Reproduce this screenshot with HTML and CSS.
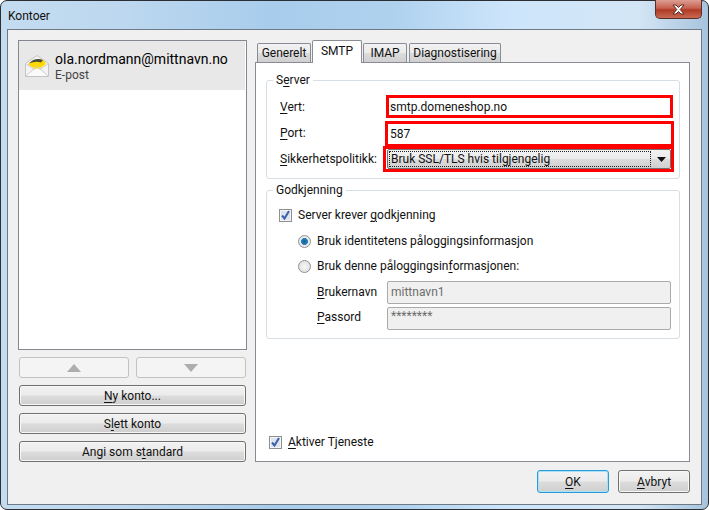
FILE: index.html
```html
<!DOCTYPE html>
<html lang="no">
<head>
<meta charset="utf-8">
<title>Kontoer</title>
<link rel="stylesheet" href="styles.css">
</head>
<body>
<div class="window">
  <div class="titlebar">
    <span class="title">Kontoer</span>
    <button class="close" aria-label="Lukk">
      <svg width="13" height="11" viewBox="0 0 13 11"><path d="M1 1h3l2.500 2.500L9 1h3L8.200 5.500 12 10H9L6.500 7.500 4 10H1l3.800-4.500z" fill="#fff" stroke="#5e2a22" stroke-width="1"/></svg>
    </button>
  </div>
  <div class="client">
    <div class="main">
      <div class="left">
        <div class="list">
          <div class="account">
            <svg class="envelope" width="24" height="24" viewBox="0 0 24 24">
              <path d="M.5 9.500 12 1.500l11.500 8v13H.5z" fill="#f4f4f4" stroke="#c4c4c4"/>
              <path d="M3 10.500C7 6 13 4 19 6.500l2 3.500-8 5.500a2 2 0 0 1-2 0z" fill="#ffd800"/>
              <path d="M4 9.500C8 5 13 4 18 6l-2 2.500C12 7 8 8 4 9.500z" fill="#4a4a3a"/>
              <path d="M.5 22.500 10 13.500q2-1.500 4 0l9.500 9M.5 9.500l9.500 6.500M23.500 9.500l-9.500 6.500" fill="none" stroke="#cfcfcf"/>
              <path d="M2 22 11 14.500h2L22 22z" fill="#fafafa"/>
            </svg>
            <div class="account-text">
              <div class="account-name">ola.nordmann@mittnavn.no</div>
              <div class="account-type">E-post</div>
            </div>
          </div>
        </div>
        <div class="arrows">
          <button class="btn disabled"><svg width="14" height="8" viewBox="0 0 14 8"><path d="M7 0l7 8H0z" fill="#adadad"/></svg></button>
          <button class="btn disabled"><svg width="14" height="8" viewBox="0 0 14 8"><path d="M0 0h14L7 8z" fill="#adadad"/></svg></button>
        </div>
        <button class="btn wide"><u>N</u>y konto...</button>
        <button class="btn wide">S<u>l</u>ett konto</button>
        <button class="btn wide">Angi som s<u>t</u>andard</button>
      </div>
      <div class="right">
        <div class="tabs">
          <div class="tab t1">Generelt</div>
          <div class="tab active t2">SMTP</div>
          <div class="tab t3">IMAP</div>
          <div class="tab t4">Diagnostisering</div>
        </div>
        <div class="pane">
          <fieldset class="group server">
            <legend>S<u>e</u>rver</legend>
            <div class="row row-vert">
              <label class="lbl"><u>V</u>ert:</label>
              <div class="red red-vert"><span class="val">smtp.domeneshop.no</span></div>
            </div>
            <div class="row row-port">
              <label class="lbl"><u>P</u>ort:</label>
              <div class="red red-port"><span class="val">587</span></div>
            </div>
            <div class="row row-sik">
              <label class="lbl"><u>S</u>ikkerhetspolitikk:</label>
              <div class="red red-sik">
                <div class="select">
                  <span class="focus">Bruk SSL/TLS hvis tilgjengelig</span>
                  <svg class="caret" width="9" height="5" viewBox="0 0 9 5"><path d="M0 0h9L4.500 5z" fill="#111"/></svg>
                </div>
              </div>
            </div>
          </fieldset>
          <fieldset class="group auth">
            <legend>Godkjenning</legend>
            <div class="check-row">
              <span class="checkbox"><svg width="11" height="11" viewBox="0 0 11 11"><path d="M2 5.500l2.500 3L9 1" fill="none" stroke="#3c5fa8" stroke-width="2"/></svg></span>
              <span>Server krever <u>g</u>odkjenning</span>
            </div>
            <div class="radio-row first">
              <span class="radio on"></span><span>Bruk identitetens påloggingsinformasjon</span>
            </div>
            <div class="radio-row second">
              <span class="radio"></span><span>Bruk denne påloggingsin<u>f</u>ormasjonen:</span>
            </div>
            <div class="cred first-cred">
              <label class="cred-lbl"><u>B</u>rukernavn</label>
              <div class="input">mittnavn1</div>
            </div>
            <div class="cred second-cred">
              <label class="cred-lbl"><u>P</u>assord</label>
              <div class="input pass">********</div>
            </div>
          </fieldset>
          <div class="activate">
            <span class="checkbox"><svg width="11" height="11" viewBox="0 0 11 11"><path d="M2 5.500l2.500 3L9 1" fill="none" stroke="#3c5fa8" stroke-width="2"/></svg></span>
            <span><u>A</u>ktiver Tjeneste</span>
          </div>
        </div>
      </div>
    </div>
    <div class="footer">
      <button class="btn dlg default"><u>O</u>K</button>
      <button class="btn dlg"><u>A</u>vbryt</button>
    </div>
  </div>
</div>
</body>
</html>
```
FILE: styles.css
```css
* { box-sizing: border-box; }
html, body { margin: 0; padding: 0; background: #fff; }
body { width: 709px; height: 510px; overflow: hidden; font: 12px/16px Roboto, "Noto Sans", "Liberation Sans", sans-serif; color: #111; }
u { text-decoration: underline; text-underline-offset: 2px; }

.window {
  width: 709px; height: 510px; padding: 0 6px 5px;
  border: 1px solid #2b2f33; border-radius: 7px;
  background: linear-gradient(90deg, #c4dcf0 0, #bcd7ef 18%, #a8cdec 38%, #aed1ee 55%, #cde5fb 72%, #d3e6f6 90%, #a7c3dc 100%);
  display: flex; flex-direction: column;
}
.titlebar { height: 28px; display: flex; align-items: flex-start; justify-content: space-between; flex: none; }
.title { margin-top: 7px; margin-left: 1px; font-size: 12px; line-height: 16px; color: #111; }
.close {
  width: 47px; height: 19px; margin: -1px 0 0 0; padding: 0; display: flex; align-items: center; justify-content: center;
  border: 1px solid #5a2f2a; border-top: 0; border-radius: 0 0 5px 5px;
  background: linear-gradient(#dc9f93 0, #c7604f 45%, #b03a26 55%, #c86a52 100%);
}
.client {
  flex: 1; display: flex; flex-direction: column; background: #f0f0f0; border: 1px solid #6e7a86; padding: 10px 11px 11px 10px;
}
.main { display: flex; gap: 8px; flex: 1; }
.left { width: 229px; display: flex; flex-direction: column; flex: none; }
.list { height: 310px; background: #fff; border: 1px solid #828790; padding-right: 1px; }
.account { height: 49px; background: #e8e8e8; display: flex; align-items: flex-start; padding: 12px 0 0 6px; }
.envelope { margin-top: 1px; flex: none; }
.account-text { margin-left: 6px; margin-top: -3px; }
.account-name { font-size: 14px; line-height: 18px; color: #000; }
.account-type { font-size: 12px; line-height: 16px; color: #444; margin-top: -1px; }

.btn {
  font: inherit; color: #111; padding: 0; border: 1px solid #707070; border-radius: 3px;
  background: linear-gradient(#f2f2f2 0, #ebebeb 48%, #dcdcdc 52%, #cfcfcf 100%);
  box-shadow: inset 0 0 0 1px #f8f8f8;
  display: flex; align-items: center; justify-content: center;
}
.arrows { display: flex; justify-content: space-between; margin: 7px 1px 0; }
.disabled { width: 110px; height: 21px; background: #f4f4f4; border-color: #c2c2c2; box-shadow: none; }
.wide { height: 21px; margin: 7px 1px 0; }

.right { flex: 1; display: flex; flex-direction: column; }
.tabs { height: 23px; display: flex; align-items: flex-end; padding-left: 2px; gap: 1px; margin-bottom: -1px; position: relative; z-index: 1; flex: none; }
.tab {
  height: 19px; border: 1px solid #898c95; border-bottom: 0; border-radius: 2px 2px 0 0; padding-top: 1px; text-align: center;
  background: linear-gradient(#f2f2f2 0, #ebebeb 48%, #dcdcdc 52%, #cfcfcf 100%);
  margin-bottom: 1px;
}
.t1 { width: 54px; }
.t2 { width: 50px; }
.t3 { width: 44px; margin-right: 1px; }
.t4 { width: 92px; }
.active { height: 23px; margin-bottom: 0; background: #fff; padding-top: 2px; }
.pane {
  flex: 1; background: #fff; border: 1px solid #898c95; padding: 9px 9px 11px 10px; display: flex; flex-direction: column;
}
.group { margin: 0; padding: 0; border: 1px solid #d5dfe5; border-radius: 3px; min-width: 0; }
.group legend { padding: 0 3px; margin-left: 6px; line-height: 16px; }
.server { height: 107px; padding: 7px 0 0; flex: none; }
.row { display: flex; align-items: center; }
.lbl { width: 110px; margin-left: 13px; flex: none; }
.red { border: 3px solid #f00; background: #fff; }
.val { display: block; }
.row-vert { height: 23px; }
.red-vert { width: 287px; height: 23px; margin-left: -4px; padding: 1px 0 0 1px; line-height: 16px; }
.row-port { height: 26px; margin-top: 3px; }
.row-port .lbl { margin-bottom: 3px; }
.red-port { width: 289px; height: 26px; margin-left: -5px; padding: 2px 0 0 2px; line-height: 16px; }
.row-sik { height: 26px; margin-top: -1px; position: relative; }
.red-sik { width: 291px; height: 26px; margin-left: -7px; padding: 0 0 0 1px; }
.select {
  height: 20px; width: 284px; display: flex; align-items: center; padding: 1px 0 1px 1px; border: 1px solid #707070; border-radius: 2px;
  background: linear-gradient(#f2f2f2 0, #ebebeb 48%, #dcdcdc 52%, #cfcfcf 100%);
}
.focus { width: 262px; height: 16px; border: 1px dotted #222; padding-left: 1px; line-height: 15px; flex: none; }
.caret { margin-left: 6px; }

.auth { height: 157px; margin-top: 3px; padding: 0; flex: none; }
.check-row { display: flex; align-items: center; height: 16px; margin: 9px 0 0 12px; gap: 6px; }
.checkbox {
  width: 13px; height: 13px; border: 1px solid #8e8f8f; flex: none; display: flex; align-items: center; justify-content: center;
  background: #dce4f2; box-shadow: inset 0 0 0 1px #f4f4f4;
}
.radio-row { display: flex; align-items: center; height: 16px; margin-left: 31px; gap: 6px; }
.radio-row.first { margin-top: 10px; }
.radio-row.second { margin-top: 9px; }
.radio {
  width: 13px; height: 13px; border-radius: 50%; border: 1px solid #8e8f8f; flex: none; background: radial-gradient(circle, #f6f6f6 0, #dcdcdc 100%);
}
.radio.on { background: radial-gradient(circle, #0f5f96 0, #2a86bd 42%, #e8e8e8 48%, #f2f2f2 100%); }
.cred { display: flex; align-items: center; height: 23px; margin-left: 50px; margin-top: 3px; }
.first-cred { margin-top: 7px; }
.first-cred .cred-lbl { margin-bottom: 2px; }
.second-cred .cred-lbl { margin-bottom: 4px; }
.cred-lbl { width: 70px; flex: none; }
.input {
  width: 284px; height: 100%; background: #f0f0f0; border: 1px solid #aaa; border-radius: 2px; color: #6d6d6d; padding: 2px 3px; line-height: 16px;
}
.pass { line-height: 12px; }
.activate { margin-top: auto; display: flex; align-items: center; gap: 6px; height: 16px; margin-left: 3px; }
.footer { display: flex; justify-content: flex-end; gap: 9px; flex: none; margin-top: 8px; }
.dlg { width: 72px; height: 23px; }
.default { border-color: #2b9bd8; box-shadow: inset 0 0 0 1px #a9e2f7; }
```
